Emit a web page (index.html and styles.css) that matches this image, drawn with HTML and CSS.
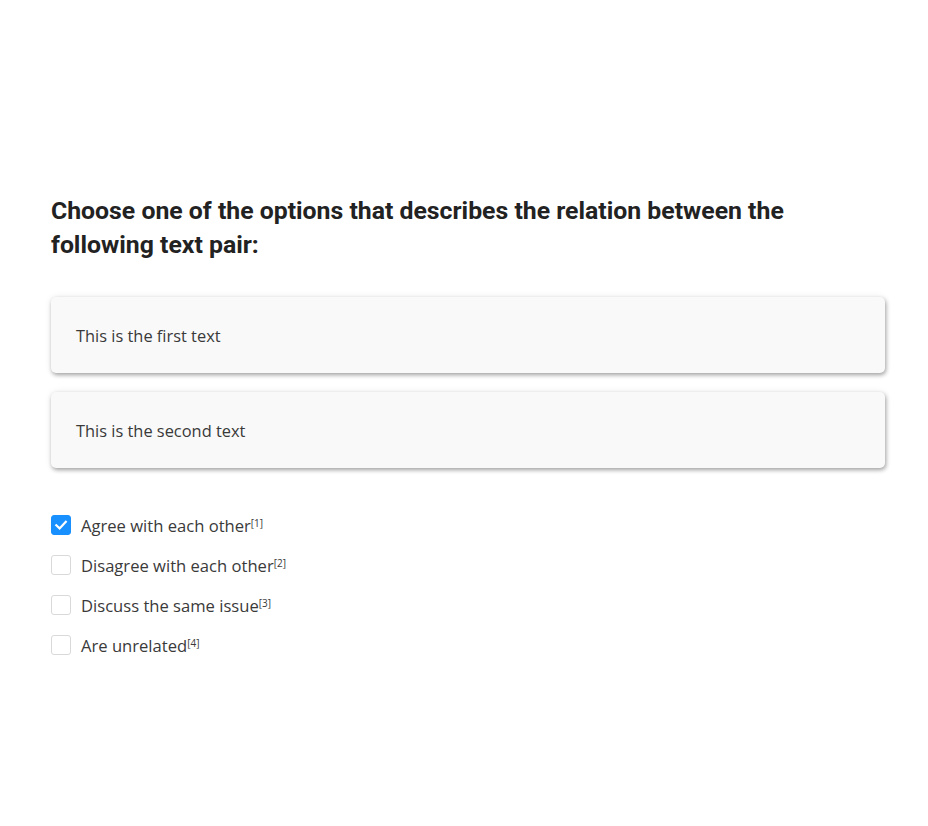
FILE: index.html
```html
<!DOCTYPE html>
<html>
<head>
<meta charset="utf-8">
<link rel="stylesheet" href="styles.css">
</head>
<body>
<div class="page">
  <h1 class="title">Choose one of the options that describes the relation between the following text pair:</h1>
  <div class="card">This is the first text</div>
  <div class="card">This is the second text</div>
  <div class="choices">
    <label class="choice">
      <span class="box checked"><svg viewBox="0 0 20 20" width="20" height="20"><path d="M5.3 10.2 L8.6 13.4 L14.8 6.8" fill="none" stroke="#fff" stroke-width="2.2" stroke-linecap="square"/></svg></span>
      <span class="lbl">Agree with each other<sup>[1]</sup></span>
    </label>
    <label class="choice">
      <span class="box"></span>
      <span class="lbl">Disagree with each other<sup>[2]</sup></span>
    </label>
    <label class="choice">
      <span class="box"></span>
      <span class="lbl">Discuss the same issue<sup>[3]</sup></span>
    </label>
    <label class="choice">
      <span class="box"></span>
      <span class="lbl">Are unrelated<sup>[4]</sup></span>
    </label>
  </div>
</div>
</body>
</html>
```
FILE: styles.css
```css
html, body {
  margin: 0;
  padding: 0;
  background: #fff;
}
.page {
  padding: 194px 43px 0 51px;
  font-family: "Open Sans", "Noto Sans", sans-serif;
  color: #3a3a3a;
}
.title {
  margin: 0 0 35px 0;
  font-family: Roboto, sans-serif;
  font-weight: 700;
  font-size: 24.8px;
  line-height: 34px;
  color: #222;
  max-width: 800px;
}
.card {
  height: 76px;
  box-sizing: border-box;
  padding: 0 25px;
  display: flex;
  align-items: center;
  background: #f9f9f9;
  border-radius: 5px;
  box-shadow: 1px 2px 4px rgba(0,0,0,0.35), 0 0 8px rgba(0,0,0,0.06);
  font-size: 16.4px;
  color: #3a3a3a;
  margin-bottom: 19px;
}
.choices {
  margin-top: 37px;
  display: flex;
  flex-direction: column;
}
.choice {
  display: flex;
  align-items: center;
  height: 40px;
  font-size: 16.6px;
  color: #3a3a3a;
}
.box {
  width: 20px;
  height: 20px;
  box-sizing: border-box;
  border: 1px solid #d9d9d9;
  border-radius: 3px;
  background: #fff;
  margin-right: 10px;
  display: flex;
}
.box.checked {
  background: #1890ff;
  border-color: #1890ff;
}
.box svg { margin: -1px; }
.lbl sup {
  font-size: 10px;
  vertical-align: 5px;
  line-height: 0;
}
```
